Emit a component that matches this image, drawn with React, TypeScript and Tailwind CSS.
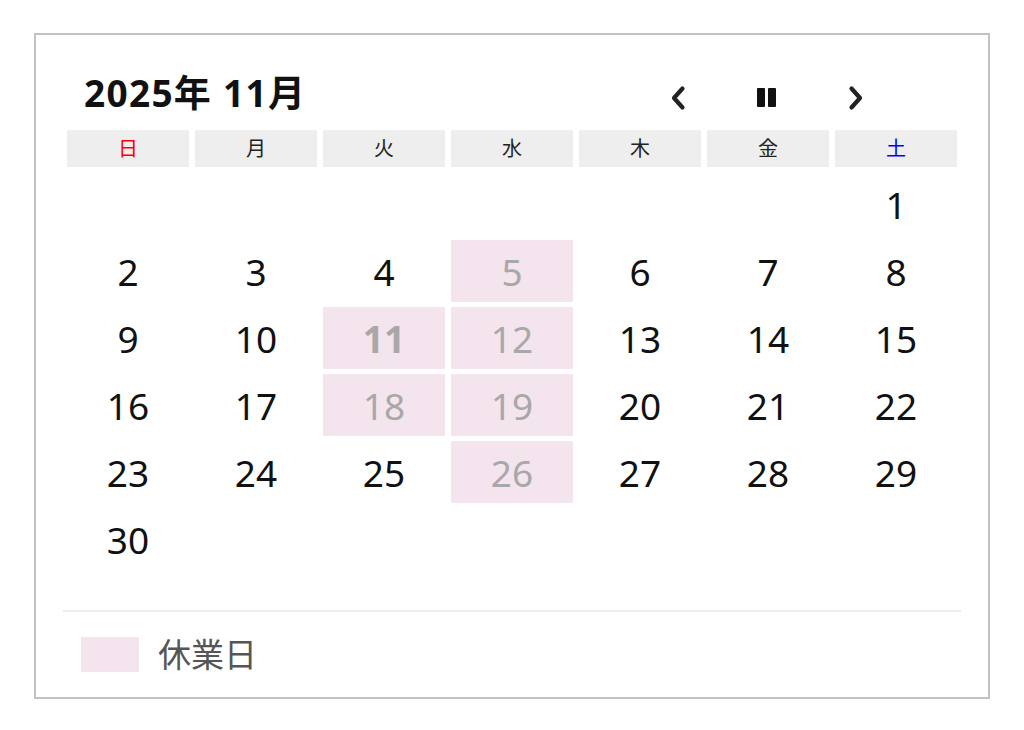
import React from "react";

const WEEK = ["日", "月", "火", "水", "木", "金", "土"];

// 休業日
const HOLIDAYS = [5, 11, 12, 18, 19, 26];
const TODAY = 11;

function buildCells(year: number, month: number) {
  const first = new Date(year, month - 1, 1).getDay();
  const days = new Date(year, month, 0).getDate();
  const cells: (number | null)[] = [];
  for (let i = 0; i < first; i++) cells.push(null);
  for (let d = 1; d <= days; d++) cells.push(d);
  while (cells.length % 7 !== 0) cells.push(null);
  return cells;
}

function ChevronLeft() {
  return (
    <svg width="16" height="26" viewBox="0 0 16 26" fill="none">
      <path d="M12.5 3.5 L4 13 L12.5 22.5" stroke="#222" strokeWidth="4.2" strokeLinecap="round" strokeLinejoin="round" />
    </svg>
  );
}

function ChevronRight() {
  return (
    <svg width="16" height="26" viewBox="0 0 16 26" fill="none">
      <path d="M3.5 3.5 L12 13 L3.5 22.5" stroke="#222" strokeWidth="4.2" strokeLinecap="round" strokeLinejoin="round" />
    </svg>
  );
}

function PauseIcon() {
  return (
    <svg width="21" height="20" viewBox="0 0 21 20">
      <rect x="0" y="0" width="8" height="19" rx="1" fill="#111" />
      <rect x="11" y="0" width="8" height="19" rx="1" fill="#111" />
    </svg>
  );
}

export default function App() {
  const cells = buildCells(2025, 11);

  return (
    <div
      className="w-[1024px] h-[730px] bg-white pt-[33px] pl-[34px]"
      style={{ fontFamily: '"Noto Sans", "Noto Sans CJK JP", sans-serif' }}
    >
      <div className="w-[956px] h-[666px] border-2 border-[#c2c2c2] bg-white flex flex-col">
        {/* Header */}
        <div className="px-[31px] pt-[34px]">
          <div className="flex items-center justify-between h-[46px] mb-[15px]">
            <h2 className="text-[37px] font-bold text-[#111] leading-none pl-[17px] tracking-[0.035em]">
              2025年 11月
            </h2>
            <div className="flex items-center gap-[49px] mr-[81px] mt-[12px]">
              <button className="w-[40px] h-[30px] flex items-center justify-center">
                <ChevronLeft />
              </button>
              <button className="w-[40px] h-[30px] flex items-center justify-center">
                <PauseIcon />
              </button>
              <button className="w-[40px] h-[30px] flex items-center justify-center">
                <ChevronRight />
              </button>
            </div>
          </div>

          {/* Week labels */}
          <div className="grid grid-cols-7 gap-x-[6px] mb-[6px]">
            {WEEK.map((w, i) => (
              <div
                key={w}
                className={`h-[37px] bg-[#eeeeee] flex items-center justify-center text-[20px] ${
                  i === 0 ? "text-[#ff0000]" : i === 6 ? "text-[#0000ff]" : "text-[#222]"
                }`}
              >
                {w}
              </div>
            ))}
          </div>

          {/* Days */}
          <div className="grid grid-cols-7 gap-x-[6px] gap-y-[5px]">
            {cells.map((d, i) => {
              const off = d !== null && HOLIDAYS.includes(d);
              return (
                <div
                  key={i}
                  className={`h-[62px] flex items-center justify-center text-[37px] leading-none ${
                    off ? "bg-[#f4e4ee] text-[#a8a8a8]" : "text-[#111]"
                  } ${d === TODAY ? "font-bold" : "font-normal"}`}
                >
                  {d ?? ""}
                </div>
              );
            })}
          </div>
        </div>

        {/* Legend */}
        <div className="mx-[27px] mt-[40px] border-t-2 border-[#eeeeee]" />
        <div className="flex items-center gap-[19px] pl-[45px] pt-[25px]">
          <span className="w-[58px] h-[35px] bg-[#f4e4ee]" />
          <span className="text-[33px] text-[#555] leading-none">休業日</span>
        </div>
      </div>
    </div>
  );
}
